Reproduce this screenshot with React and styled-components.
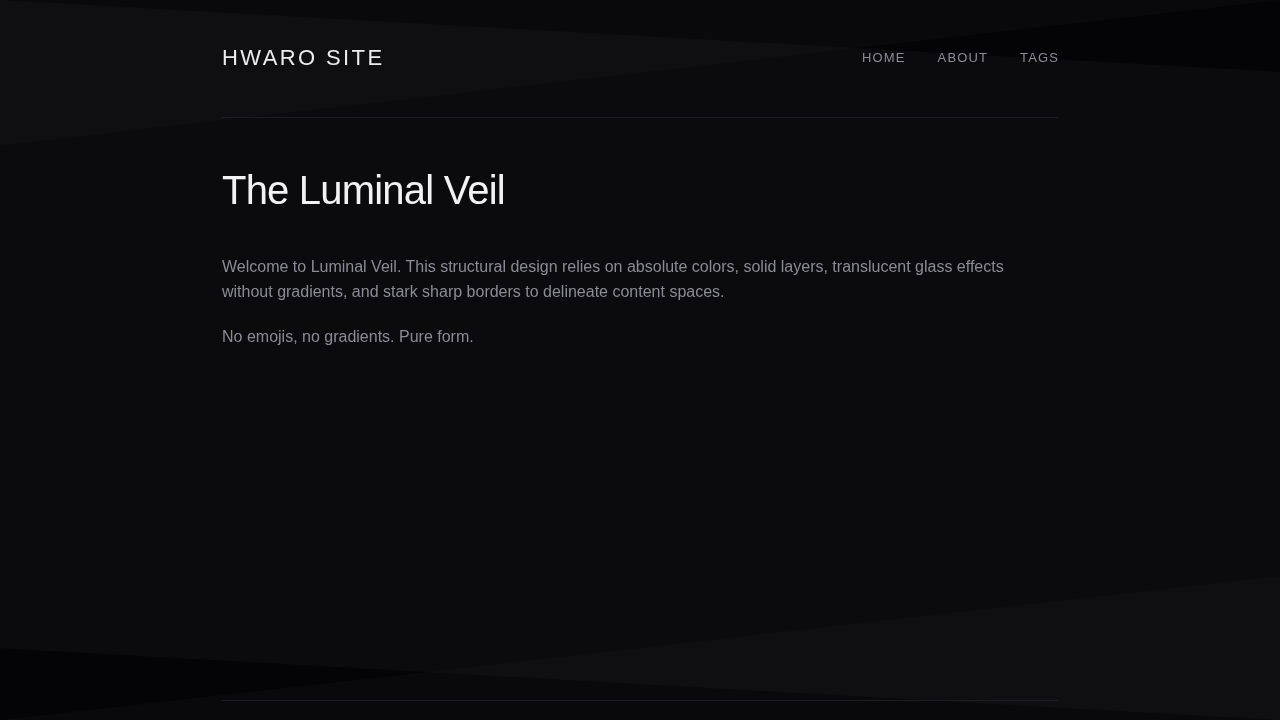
import React from "react";
import styled, { createGlobalStyle } from "styled-components";

const GlobalStyle = createGlobalStyle`
  *, *::before, *::after { box-sizing: border-box; }
  html, body { margin: 0; padding: 0; }
  body {
    background: #0b0b0d;
    color: #e8e8ea;
    font-family: "Liberation Sans", Arial, sans-serif;
    -webkit-font-smoothing: antialiased;
  }
`;

const Backdrop = styled.div`
  position: fixed;
  inset: 0;
  z-index: 0;
  pointer-events: none;
`;

const Shard = styled.div`
  position: absolute;
  inset: 0;
  background: ${(p) => p.$color};
  clip-path: ${(p) => p.$shape};
`;

const Page = styled.div`
  position: relative;
  z-index: 1;
  max-width: 900px;
  margin: 0 auto;
  padding: 0 32px;
  display: flex;
  flex-direction: column;
`;

const Header = styled.header`
  display: flex;
  align-items: center;
  justify-content: space-between;
  height: 118px;
  border-bottom: 1px solid #1d1d21;
`;

const Logo = styled.a`
  font-size: 22px;
  line-height: 1;
  letter-spacing: 2.4px;
  color: #ececee;
  text-decoration: none;
  margin-top: -1px;
`;

const Nav = styled.nav`
  display: flex;
  gap: 32px;
  margin-top: -3px;
`;

const NavLink = styled.a`
  font-size: 13px;
  letter-spacing: 1.15px;
  line-height: 1;
  color: #8c8c96;
  text-decoration: none;
  &:last-child { margin-right: -1.15px; }
`;

const Main = styled.main`
  min-height: 582px;
  padding-top: 48px;
`;

const Title = styled.h1`
  margin: 0 0 40px;
  font-size: 40px;
  line-height: 48px;
  font-weight: 400;
  letter-spacing: -0.8px;
  color: #f2f2f4;
`;

const Paragraph = styled.p`
  margin: 0 0 20px;
  font-size: 16px;
  line-height: 25px;
  color: #8b8b95;
`;

const Footer = styled.footer`
  border-top: 1px solid #1d1d21;
  padding: 32px 0;
`;

const shards = [
  { shape: "polygon(0 0, 100% 0, 100% 10%)", color: "rgba(0,0,4,0.55)" },
  { shape: "polygon(0 0, 100% 0, 0 20.2%)", color: "rgba(255,255,255,0.018)" },
  { shape: "polygon(0 90%, 100% 100%, 0 100%)", color: "rgba(0,0,4,0.55)" },
  { shape: "polygon(100% 80%, 100% 100%, 0 100%)", color: "rgba(255,255,255,0.018)" },
];

export default function App() {
  return (
    <>
      <GlobalStyle />
      <Backdrop>
        {shards.map((s, i) => (
          <Shard key={i} $shape={s.shape} $color={s.color} />
        ))}
      </Backdrop>
      <Page>
        <Header>
          <Logo href="#">HWARO SITE</Logo>
          <Nav>
            <NavLink href="#">HOME</NavLink>
            <NavLink href="#">ABOUT</NavLink>
            <NavLink href="#">TAGS</NavLink>
          </Nav>
        </Header>
        <Main>
          <Title>The Luminal Veil</Title>
          <Paragraph>
            Welcome to Luminal Veil. This structural design relies on absolute colors, solid layers,
            translucent glass effects without gradients, and stark sharp borders to delineate content
            spaces.
          </Paragraph>
          <Paragraph>No emojis, no gradients. Pure form.</Paragraph>
        </Main>
        <Footer />
      </Page>
    </>
  );
}
